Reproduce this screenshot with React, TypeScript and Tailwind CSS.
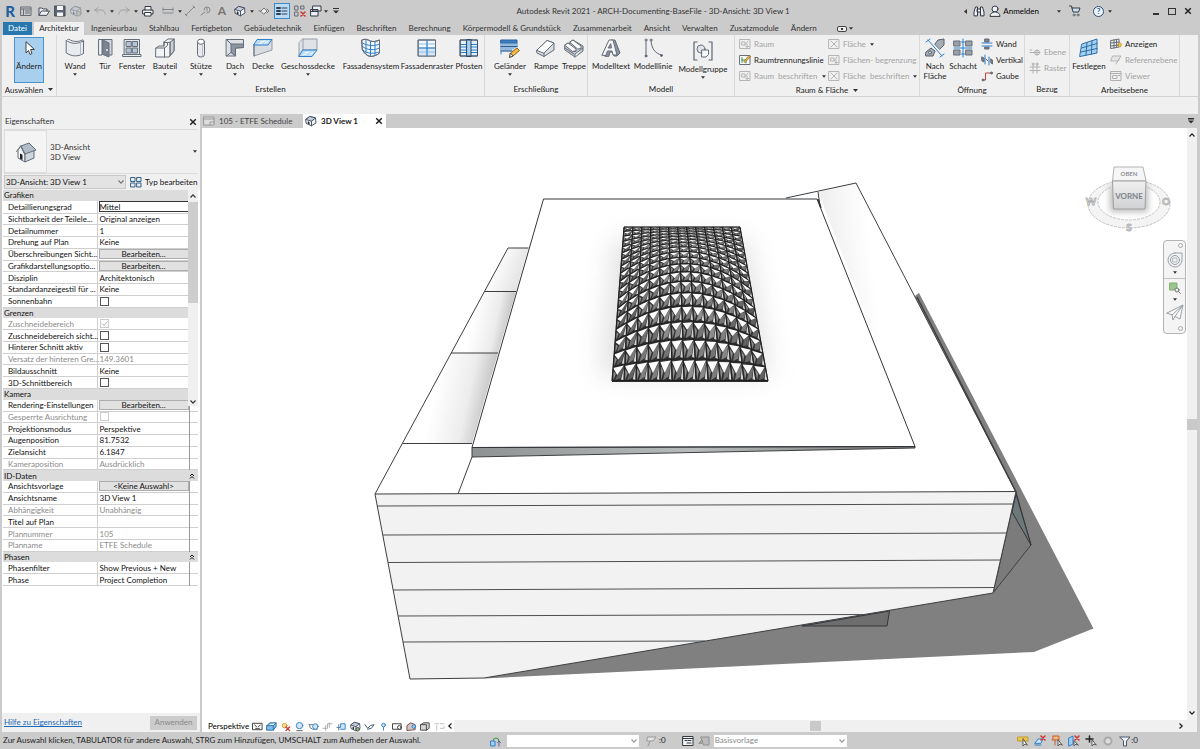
import React from 'react';

type IconProps = { children: React.ReactNode; className?: string; box?: number };

const line = '#656d79';
const blue = '#2f7fc8';
const sky = '#b9dcf5';

const Svg: React.FC<IconProps> = ({ children, className = 'size-5', box = 20 }) => (
  <svg viewBox={`0 0 ${box} ${box}`} className={`${className} shrink-0`} fill="none" stroke={line} strokeWidth="1" strokeLinejoin="round" strokeLinecap="round" aria-hidden="true">
    {children}
  </svg>
);

const Small: React.FC<{ children: React.ReactNode }> = ({ children }) => (
  <Svg className="size-3" box={12}>{children}</Svg>
);

const Caret = ({ className = 'w-[4px]' }: { className?: string }) => (
  <svg viewBox="0 0 5 3" className={`h-[3px] shrink-0 fill-[#333] ${className}`} aria-hidden="true">
    <path d="M0 0h5L2.500 3z" />
  </svg>
);

const Chevron = ({ className = '' }: { className?: string }) => (
  <svg viewBox="0 0 8 8" className={`size-2 shrink-0 ${className}`} fill="none" stroke="currentColor" strokeWidth="1.200" aria-hidden="true">
    <path d="M1.500 2.500 4 5.200 6.500 2.500" />
  </svg>
);

const CloseX = ({ className = '' }: { className?: string }) => (
  <svg viewBox="0 0 8 8" className={`size-2 shrink-0 ${className}`} fill="none" stroke="#222" strokeWidth="1.500" aria-hidden="true">
    <path d="M1.200 1.200l5.600 5.600M6.800 1.200 1.200 6.800" />
  </svg>
);

const house = (
  <>
    <path d="M1 4.500 5 1.500l5.500 1.500 .500 5L6.500 10.800 1.500 8.500z" fill="#f3f5f8" stroke="#4a5568" />
    <path d="M5 1.500 10.500 3l-4 3.200L1 4.500z" fill="#c3ccd8" stroke="#4a5568" />
    <path d="M6.500 6.200v4.600" stroke="#4a5568" />
    <path d="M2.800 6.300l1.700.600v2.600l-1.700-.700z" fill="#222b38" stroke="none" />
  </>
);

/* ---------- ribbon icons ---------- */
const big = {
  wand: (
    <Svg>
      <path d="M1.500 2.500c5 3.500 10 4 17 .500v12.500c-6 3.500-12 3-17-.500z" fill="#e9ebee" />
      <path d="M1.500 2.500c.600-.800 1.500-1.200 2.300-1.200 5 2.800 9.500 2.800 14 .500l.700 1.200" fill="#fff" />
      <path d="M15.500 4.500v12.500" stroke="#b3bac4" />
    </Svg>
  ),
  tuer: (
    <Svg>
      <path d="M4 17V1.500h13V17h-3" fill="#d3d7dd" />
      <path d="M4 1.500h3V17H4z" fill="#f3f4f6" />
      <path d="M8 2l6 3v14l-6-2.500z" fill="#7b8491" />
      <circle cx="12" cy="12" r="1" fill="#eee" stroke="none" />
    </Svg>
  ),
  fenster: (
    <Svg>
      <path d="M2.500 1.500h15v15h-15z" fill="#e3e6ea" />
      <path d="M4.500 3.500h4.800v5H4.500zM10.700 3.500h4.800v5h-4.800zM4.500 10h4.800v5H4.500zM10.700 10h4.800v5h-4.800z" fill="#b4c4d5" />
      <path d="M1 16.500h18v2H1z" fill="#eef0f3" />
    </Svg>
  ),
  bauteil: (
    <Svg>
      <path d="M1 10l3-2h5V4l4-3h6v12l-5 6H1z" fill="#f3f4f6" />
      <path d="M1 10h8.500l3-2.500V4.500L16 4l3-3M9.500 10v9M9 4v4M12.500 4.500H9M15 4.500V18" />
      <path d="M15.500 4l3.500-3v12l-3.500 4z" fill="#cbd0d8" />
    </Svg>
  ),
  stuetze: (
    <Svg>
      <path d="M6.500 4v12.500a3.500 2.500 0 0 0 7 0V4" fill="#e8eaed" />
      <ellipse cx="10" cy="3.700" rx="3.500" ry="2.600" fill="#fff" />
      <path d="M11.500 7v11" stroke="#b6bdc7" />
    </Svg>
  ),
  dach: (
    <Svg>
      <path d="M1.500 1.500h17v8l-8 .500v8H1.500z" fill="#dde1e6" />
      <path d="M1.500 1.500 6 6h12.500v3.500L10.500 10v8L6 14.500V6" fill="#8d96a3" />
      <path d="M1.500 18 6 14.500" />
    </Svg>
  ),
  decke: (
    <Svg>
      <path d="M1 7v11l18-6V2" fill="#d9dce1" stroke="#9299a4" />
      <path d="M1 7v11" />
      <path d="M4.500 1.500H19L15 7H1z" fill={sky} stroke={blue} />
      <path d="M8 4l4-1M6 5.500l3-.500M12 5l3-1.500" stroke="#fff" />
    </Svg>
  ),
  geschoss: (
    <Svg>
      <path d="M5 1h14v11H5L1 18V5z" fill="#dfe2e7" stroke="#979ea9" />
      <path d="M5 1v11" stroke="#979ea9" />
      <path d="M5 12h14l-5 6.500H1z" fill={sky} stroke={blue} />
      <path d="M7 15l4-1M5 17l3-1M12 16.500l3-2" stroke="#fff" />
    </Svg>
  ),
  fsystem: (
    <Svg>
      <path d="M1 2c3-1.500 6-.500 8 1 3 1 6 .500 9.500-1v13c-2 2-6 3.500-9 3.500C6 18 3 15 1.500 12z" fill="#eef5fb" />
      <path d="M1.500 5c5 3 12 3.500 17 1M1.500 8.500c5 4 12 4 17 1.500M2 12c4 4 11 4 16 2M5 2v13M9.500 3.500v15M14 3.500V17" stroke={blue} />
      <path d="M1 2c3-1.500 6-.500 8 1 3 1 6 .500 9.500-1v13c-2 2-6 3.500-9 3.500C6 18 3 15 1.500 12z" />
    </Svg>
  ),
  fraster: (
    <Svg>
      <path d="M1.500 2h17v16h-17z" fill="#f3f8fc" />
      <path d="M2 10h16v8H2z" fill="#d5e6f4" stroke="none" />
      <path d="M10 2v16M1.500 6h17M1.500 10h17M1.500 14h17" stroke="#8cbfe6" />
      <path d="M10 2v16M1.500 10h17" stroke={blue} />
      <path d="M1.500 2h17v16h-17z" />
    </Svg>
  ),
  pfosten: (
    <Svg>
      <path d="M1.500 2h17v16h-17z" fill="#e3f0fa" />
      <path d="M1.500 6.500h17M1.500 9h17M1.500 12h17M1.500 14.500h17" stroke={blue} />
      <path d="M8 1.500h4v17H8z" fill="#a9d1f0" stroke="#27405c" />
      <path d="M1.500 2h17v16h-17z" stroke="#3c5068" />
    </Svg>
  ),
  gelaender: (
    <Svg>
      <path d="M1 2h16v3H1z" fill="#3d82c4" stroke="#2a5f95" />
      <path d="M1 5v11M3 5v8M5 5v8M7 5v8M9 5v8M11 5v8M13 5v6M15 5v5M17 5v4" stroke="#3d82c4" />
      <path d="M1 8.500h16M1 13h11" stroke="#2a5f95" />
      <path d="M9.500 19l1-4 6.500-5 2.500 2.500L13 18z" fill="#f4b942" stroke="#8d6420" />
      <path d="M9.500 19l1-4 2.300 2.800z" fill="#fff" stroke="#555" />
    </Svg>
  ),
  rampe: (
    <Svg>
      <path d="M1 12 11 2.500 18 5v7L8 18.500 1 15z" fill="#d9dde2" />
      <path d="M1 12 11 2.500 18 5 8 15z" fill="#fff" />
      <path d="M8 15v3.500" />
    </Svg>
  ),
  treppe: (
    <Svg>
      <path d="M1 7l3-2 2 1V4l3-2 10 6v5l-8 6L1 12z" fill="#c5ccd5" />
      <path d="M1 7l3-2 8 6v2l-3 .500zM6 4l3-2 8 6v2.500l-3 .500zM9 13.500l3-.500M1 10l9 6M11 19v-3l8-6" fill="#fafafa" />
    </Svg>
  ),
  mtext: (
    <Svg>
      <path d="M4 18 10 2h4l5 13-3 3h-3l-2-4H9l-1 4z" fill="#8b93a0" />
      <path d="M1 17 8 2h4l4 15h-4l-1-4H6.500L5 17zM7.500 10h3L9.800 6z" fill="#f4f5f7" fillRule="evenodd" />
    </Svg>
  ),
  mlinie: (
    <Svg>
      <path d="M3 2.500v15.500M8 2.500c.500 8 4 13 10.500 14.500" stroke="#5c6573" />
      <circle cx="3" cy="2" r="1" fill="#eee" />
      <circle cx="3" cy="18" r="1" fill="#555" />
      <circle cx="8" cy="2" r="1" fill="#eee" />
      <circle cx="18.500" cy="17.500" r="1" fill="#555" />
    </Svg>
  ),
  mgruppe: (
    <Svg>
      <path d="M4 1H1v18h3M16 1h3v18h-3" stroke="#5c6573" strokeWidth="1.200" />
      <circle cx="8" cy="8" r="4" fill="#dfe3e8" />
      <path d="M9 9h6.500v4.500L13 16H9z" fill="#f6f7f8" />
    </Svg>
  ),
  nach: (
    <Svg>
      <path d="M3 2l14 16M1 4l4-3M15 19l4-3" stroke={blue} />
      <path d="M10 6l3-4 6-1v6l-4 4z" fill="#a7adb5" stroke="#555d69" />
      <path d="M1 14l5-4 4 3-2 5H1z" fill="#a7adb5" stroke="#555d69" />
      <circle cx="5" cy="14.500" r="1.500" fill="#eee" stroke="#555d69" />
    </Svg>
  ),
  schacht: (
    <Svg>
      <path d="M1 3h6v5H1zM13 3h6v5h-6zM1 12h6v5H1zM13 12h6v5h-6z" fill="#9aa1ac" stroke="#656d79" />
      <path d="M10 1v18M1 10h18M8.500 4h3M8.500 16h3" stroke={blue} />
    </Svg>
  ),
  festlegen: (
    <Svg>
      <path d="M3 6 18 1v14L1 18.500z" fill="#a5d0ef" stroke="#2c6ea8" />
      <path d="M2.500 10 18 5.500M1.800 14 18 10.500M8 4.500 7 17M13 2.800 12.500 16" stroke="#2c6ea8" />
    </Svg>
  ),
};

const grid = (
  <Small>
    <path d="M1 1.500h10v9H1z" stroke="#b5b5b5" fill="#f0f0f0" />
    <path d="M3 4h3v3H3zM6 7l3-4M7 8.500h3M8 6v4" stroke="#b5b5b5" />
  </Small>
);
const crossBox = (
  <Small>
    <path d="M1 1.500h10v9H1z" stroke="#b5b5b5" fill="#f0f0f0" />
    <path d="M3 3l6 6M9 3 3 9" stroke="#b5b5b5" />
  </Small>
);
const raumtrenn = (
  <Small>
    <path d="M1 1.500h10v9H1z" stroke={line} fill="#fff" />
    <path d="M3 3.500v5M3 6h4v3" stroke="#3a8a4c" />
    <path d="M5 7.500 10 1.500l1.500 1L6.500 8z" fill="#f4b942" stroke="#8d6420" strokeWidth=".700" />
  </Small>
);
const wandIcon = (
  <Small>
    <path d="M4 1h4v3H4zM4 9h4v2H4z" fill="#777f8b" />
    <path d="M1 5h10M1 8h10" stroke={blue} />
  </Small>
);
const vertikalIcon = (
  <Small>
    <path d="M4 1v9M8 3v8" stroke={blue} />
    <path d="M1 3l2 1v4L1 7zM10 5l1.500 1v4L10 9z" fill="#777f8b" />
    <path d="M5 5l2 2" />
  </Small>
);
const gaubeIcon = (
  <Small>
    <path d="M2 10h2.500V3H11" stroke="#b8473c" />
    <circle cx="2" cy="10" r="1" fill="#777" />
    <circle cx="10.500" cy="3" r="1" fill="#777" />
  </Small>
);
const ebeneIcon = (
  <Small>
    <path d="M1 4h2M1 6.500h4" stroke="#b0b0b0" />
    <circle cx="8" cy="6.500" r="2.500" stroke="#b0b0b0" />
    <path d="M5 6.500h6M8 4v5" stroke="#b0b0b0" />
  </Small>
);
const rasterIcon = (
  <Small>
    <path d="M4 3v8M8 3v8M1 5h10M1 8.500h10" stroke="#b0b0b0" />
    <circle cx="4" cy="2" r="1" stroke="#b0b0b0" />
    <circle cx="8" cy="2" r="1" stroke="#b0b0b0" />
  </Small>
);
const anzeigenIcon = (
  <Small>
    <path d="M1 2.500 9 1v8L1 10.500zM1 5l8-1M1 8l8-1M4 2v8M6.500 1.500v8" stroke={line} />
    <path d="M8 6.500c0-2 3.500-2 3.500 0 0 1-1 1.500-1 2.500H9c0-1-1-1.500-1-2.500z" fill="#f6c445" stroke="#b98515" strokeWidth=".600" />
  </Small>
);
const refIcon = (
  <Small>
    <path d="M3 2h8L8 7H1z" fill="#e6e6e6" stroke="#b5b5b5" />
    <path d="M6 10l3-5" stroke="#b5b5b5" />
  </Small>
);
const viewerIcon = (
  <Small>
    <path d="M1 1.500h10v9H1zM1 3.500h10M3 5.500h4v3H3zM8 5.500h2" stroke="#b0b0b0" />
  </Small>
);

interface BigButtonProps {
  icon: React.ReactNode;
  label: string;
  width: string;
  caret?: boolean;
  low?: boolean;
}

const BigButton: React.FC<BigButtonProps> = ({ icon, label, width, caret, low }) => (
  <button className={`${width} flex flex-col items-center shrink-0 whitespace-nowrap ${low ? 'pt-[6px]' : 'pt-[3px]'}`}>
    {icon}
    <span className="mt-[3px] leading-[10px] whitespace-pre text-center">{label}</span>
    {caret && <Caret className="w-[4px] mt-[2px]" />}
  </button>
);

interface SmallButtonProps {
  icon: React.ReactNode;
  label: string;
  off?: boolean;
  caret?: boolean;
}

const SmallButton: React.FC<SmallButtonProps> = ({ icon, label, off, caret }) => (
  <button disabled={off} className={`h-4 flex items-center gap-[3px] whitespace-nowrap ${off ? 'text-[#a3a3a3]' : 'text-[#222]'}`}>
    {icon}
    <span className="whitespace-pre">{label}</span>
    {caret && <Caret className="w-[4px] ml-[1px]" />}
  </button>
);

interface PanelProps {
  title: string;
  width: string;
  caret?: boolean;
  children: React.ReactNode;
}

const Panel: React.FC<PanelProps> = ({ title, width, caret, children }) => (
  <section className={`${width} flex flex-col border-r border-[#d9d9d9]`}>
    <div className="flex-1 flex">{children}</div>
    <h2 className="h-[14px] flex items-center justify-center gap-[5px] leading-none">
      {title}
      {caret && <Caret className="w-[5px]" />}
    </h2>
  </section>
);

/* ---------- title bar ---------- */
const quickItems: { name: string; width: string; icon: React.ReactNode; active?: boolean }[] = [
  { name: 'Startseite', width: 'w-4', icon: <Small><path d="M1 2h10v8.500H1zM1 4h10M3.500 4v6M5.500 6h4M5.500 8h4" /></Small> },
  { name: 'Öffnen', width: 'w-5', icon: <Small><path d="M1 10V3h3l1 1h4v2M1 10l2.500-4H11.500L9 10z" fill="#eef1f5" stroke="#444c58" /></Small> },
  { name: 'Speichern', width: 'w-3', icon: <Small><path d="M1 1h10v10H1z" fill="#5c6675" stroke="#3f4855" /><path d="M3 1h6v4H3zM3 7.500h6V11H3z" fill="#f4f4f4" stroke="none" /></Small> },
  { name: 'Synchronisieren', width: 'w-5', icon: <Small><g opacity=".450">{house}<circle cx="8.500" cy="8.500" r="2.500" fill="#aaa" /></g></Small> },
  { name: 'c1', width: 'w-1', icon: <Caret /> },
  { name: 'Rückgängig', width: 'w-5', icon: <Small><path d="M1 5h6c3 0 4 2 4 4M1 5l3-2.500M1 5l3 2.500" stroke="#a0a0a0" /></Small> },
  { name: 'c2', width: 'w-1', icon: <Caret /> },
  { name: 'Wiederholen', width: 'w-5', icon: <Small><path d="M11 5H5C2 5 1 7 1 9M11 5 8 2.500M11 5 8 7.500" stroke="#a0a0a0" /></Small> },
  { name: 'c3', width: 'w-1', icon: <Caret /> },
  { name: 'Drucken', width: 'w-5', icon: <Small><path d="M3 5V1.500h6V5M1 5h10v4H1z" fill="#f2f2f2" stroke="#333a45" /><path d="M3 7.500h6V11H3z" fill="#fff" stroke="#333a45" /></Small> },
  { name: 'Messen', width: 'w-5', icon: <Small><path d="M1 8h10M1 3v3M11 3v3M1 4.500h10" stroke="#85888d" /></Small> },
  { name: 'c4', width: 'w-1', icon: <Caret /> },
  { name: 'Bemaßung', width: 'w-4', icon: <Small><path d="M2 10 10 2M1 9l2 2M9 1l2 2" stroke="#85888d" /></Small> },
  { name: 'Kennzeichen', width: 'w-4', icon: <Small><path d="M1 10 5 7M4 5a3 3 0 1 1 6 0 3 3 0 0 1-3 3M7 3v3" stroke="#85888d" /></Small> },
  { name: 'Text', width: 'w-4', icon: <span className="text-xs leading-none font-bold text-[#777]">A</span> },
  { name: '3D-Ansicht', width: 'w-5', icon: <Small>{house}</Small> },
  { name: 'c5', width: 'w-1', icon: <Caret /> },
  { name: 'Schnitt', width: 'w-5', icon: <Small><path d="M3 6 6 3l3 3-3 3z" fill="#eee" stroke="#777" /><path d="M1 6h2M9 4l2 2-2 2" stroke="#777" /></Small> },
  { name: 'Dünne Linien', width: 'w-4', active: true, icon: <Small><path d="M1 3h3M1 6h3M1 9h3" strokeWidth="2" stroke="#2c3f57" /><path d="M6 3h5M6 6h5M6 9h5" stroke="#2c3f57" /></Small> },
  { name: 'Verdeckte schließen', width: 'w-5', icon: <Small><path d="M1 1h3v4H1zM7 1h3v3H7zM1 7h3v4H1z" /><path d="M7 7l4 4M11 7l-4 4" stroke="#d0342c" strokeWidth="1.500" /></Small> },
  { name: 'Fenster wechseln', width: 'w-3', icon: <Small><path d="M3 1h8v5H3zM1 4.500h7V11H1zM1 6.500h7" fill="#eef1f5" stroke="#333a45" /></Small> },
  { name: 'c6', width: 'w-2', icon: <Caret /> },
  { name: 'Anpassen', width: 'w-3', icon: <svg viewBox="0 0 6 6" className="size-[6px] fill-[#333]"><path d="M0 0h6v1H0zM0 2.500h6L3 5.500z" /></svg> },
];

const TitleBar = () => (
  <header className="h-[22px] flex items-center shrink-0 pr-1">
    <div className="flex items-center pl-[2px]">
      <span className="w-4 flex justify-center text-[15px] leading-none font-black text-[#1f5f9e]">R</span>
      {quickItems.map((item) => (
        <button
          key={item.name}
          aria-label={item.name}
          className={`${item.width} h-4 flex items-center justify-center shrink-0 ${item.active ? 'bg-[#bcdcf4] border border-[#3c8acb]' : ''}`}
        >
          {item.icon}
        </button>
      ))}
    </div>
    <h1 className="flex-1 text-center text-[#333]">Autodesk Revit 2021 - ARCH-Documenting-BaseFile - 3D-Ansicht: 3D View 1</h1>
    <div className="flex items-center">
      <svg viewBox="0 0 3 5" className="w-[3px] h-[5px] fill-[#333] mr-[6px]" aria-hidden="true"><path d="M3 0v5L0 2.500z" /></svg>
      <button aria-label="Suchen" className="mr-1"><Small><path d="M1 10.500V7l1.500-5h2v8.500zM7.500 10.500V2h2L11 7v3.500zM4.500 4h3v3h-3z" fill="#eef1f5" stroke="#333a45" /></Small></button>
      <button className="flex items-center gap-[2px]">
        <Small><circle cx="6" cy="4" r="3" fill="#eef1f5" stroke="#333a45" /><path d="M1 11c0-3 3-3.500 4-4h2c1 .500 4 1 4 4z" fill="#eef1f5" stroke="#333a45" /></Small>
        Anmelden
      </button>
      <Caret className="w-[4px] ml-[18px] mr-2" />
      <button aria-label="App Store" className="mr-3"><Small><path d="M.500 1h2l1.500 6h5.500l1.500-4H3" fill="#cfe0f2" stroke="#333a45" /><circle cx="5" cy="10" r="1" /><circle cx="9" cy="10" r="1" /></Small></button>
      <button aria-label="Hilfe" className="size-[11px] rounded-full border border-[#2d4a6d] bg-[#eef5fb] flex items-center justify-center font-bold text-[#1f5f9e] leading-none">?</button>
      <Caret className="w-[4px] ml-1 mr-9" />
      <button aria-label="Minimieren" className="w-4 h-2 flex items-end justify-center"><span className="w-[6px] h-[2px] bg-[#333]" /></button>
      <button aria-label="Maximieren" className="w-4 flex justify-center"><span className="w-2 h-[7px] border border-[#333]" /></button>
      <button aria-label="Schließen" className="w-4 flex justify-center"><CloseX /></button>
    </div>
  </header>
);

const ribbonTabs = [
  'Ingenieurbau', 'Stahlbau', 'Fertigbeton', 'Gebäudetechnik', 'Einfügen', 'Beschriften', 'Berechnung',
  'Körpermodell & Grundstück', 'Zusammenarbeit', 'Ansicht', 'Verwalten', 'Zusatzmodule', 'Ändern',
];

const RibbonTabs = () => (
  <nav className="h-[13px] flex items-stretch shrink-0 pl-[3px] whitespace-nowrap text-[#333]">
    <button className="w-[29px] bg-[#2678ae] text-white">Datei</button>
    <button className="w-[50px] ml-[2px] mr-[1px] bg-[#f0f0f0] text-[#222]">Architektur</button>
    {ribbonTabs.map((tab) => (
      <button key={tab} className="px-[6px]">{tab}</button>
    ))}
    <button aria-label="Multifunktionsleiste minimieren" className="ml-[14px] flex items-center gap-[2px]">
      <span className="w-[10px] h-[6px] rounded-[2px] border border-[#444] bg-[#eee] flex items-center justify-center"><span className="size-[2px] bg-[#333]" /></span>
      <Caret />
    </button>
  </nav>
);

const Ribbon = () => (
  <div className="h-[62px] mx-[2px] flex shrink-0 bg-[#f0f0f0] border-b border-[#d2d2d2] text-[#222]">
    <Panel title="Auswählen" width="w-[55px]" caret>
      <button className="ml-3 mt-[2px] w-[30px] h-[46px] flex flex-col items-center bg-[#a9cfef] border border-[#4b91cc]">
        <Svg className="size-5">
          <path d="M7 4v11l2.500-2.500 1.500 4 2-1-1.500-4H15z" fill="#fff" stroke="#444" />
        </Svg>
        <span className="mt-[3px] leading-[10px]">Ändern</span>
      </button>
    </Panel>
    <Panel title="Erstellen" width="w-[428px]">
      <div className="flex pl-[2px]">
        <BigButton icon={big.wand} label="Wand" width="w-8" caret />
        <BigButton icon={big.tuer} label="Tür" width="w-7" />
        <BigButton icon={big.fenster} label="Fenster" width="w-[26px]" />
        <BigButton icon={big.bauteil} label="Bauteil" width="w-10" caret />
        <BigButton icon={big.stuetze} label="Stütze" width="w-8" caret />
        <BigButton icon={big.dach} label="Dach" width="w-9" caret />
        <BigButton icon={big.decke} label="Decke" width="w-5" />
        <BigButton icon={big.geschoss} label="Geschossdecke" width="w-[70px]" caret />
        <BigButton icon={big.fsystem} label="Fassadensystem" width="w-14" />
        <BigButton icon={big.fraster} label="Fassadenraster" width="w-14" />
        <BigButton icon={big.pfosten} label="Pfosten" width="w-7" />
      </div>
    </Panel>
    <Panel title="Erschließung" width="w-[103px]">
      <div className="flex pl-[6px]">
        <BigButton icon={big.gelaender} label="Geländer" width="w-[38px]" caret />
        <BigButton icon={big.rampe} label="Rampe" width="w-[34px]" />
        <BigButton icon={big.treppe} label="Treppe" width="w-[22px]" />
      </div>
    </Panel>
    <Panel title="Modell" width="w-[147px]">
      <div className="flex pl-[1px]">
        <BigButton icon={big.mtext} label="Modelltext" width="w-11" />
        <BigButton icon={big.mlinie} label="Modelllinie" width="w-10" />
        <BigButton icon={big.mgruppe} label="Modellgruppe" width="w-[60px]" caret low />
      </div>
    </Panel>
    <Panel title="Raum & Fläche" width="w-[185px]" caret>
      <div className="flex flex-col w-[90px] pl-1 pt-[1px]">
        <SmallButton icon={grid} label="Raum" off />
        <SmallButton icon={raumtrenn} label="Raumtrennungslinie" />
        <SmallButton icon={grid} label="Raum  beschriften" off caret />
      </div>
      <div className="flex flex-col pl-[3px] pt-[1px]">
        <SmallButton icon={crossBox} label="Fläche" off caret />
        <SmallButton icon={grid} label="Flächen- begrenzung" off />
        <SmallButton icon={crossBox} label="Fläche  beschriften" off caret />
      </div>
    </Panel>
    <Panel title="Öffnung" width="w-[105px]">
      <div className="flex pl-[1px]">
        <BigButton icon={big.nach} label={'Nach\nFläche'} width="w-7" />
        <BigButton icon={big.schacht} label="Schacht" width="w-7" />
      </div>
      <div className="flex flex-col pl-1 pt-[1px]">
        <SmallButton icon={wandIcon} label="Wand" />
        <SmallButton icon={vertikalIcon} label="Vertikal" />
        <SmallButton icon={gaubeIcon} label="Gaube" />
      </div>
    </Panel>
    <Panel title="Bezug" width="w-[45px]">
      <div className="flex flex-col pl-1 pt-[9px]">
        <SmallButton icon={ebeneIcon} label="Ebene" off />
        <SmallButton icon={rasterIcon} label="Raster" off />
      </div>
    </Panel>
    <Panel title="Arbeitsebene" width="w-[110px]">
      <BigButton icon={big.festlegen} label="Festlegen" width="w-[38px]" />
      <div className="flex flex-col pl-[2px] pt-[1px]">
        <SmallButton icon={anzeigenIcon} label="Anzeigen" />
        <SmallButton icon={refIcon} label="Referenzebene" off />
        <SmallButton icon={viewerIcon} label="Viewer" off />
      </div>
    </Panel>
  </div>
);

/* ---------- properties ---------- */
type Kind = 'text' | 'button' | 'check' | 'checked' | 'input';
interface Row { name: string; value?: string; kind?: Kind; off?: boolean }

const groups: { title: string; folded?: boolean; rows: Row[] }[] = [
  {
    title: 'Grafiken',
    rows: [
      { name: 'Detaillierungsgrad', value: 'Mittel', kind: 'input' },
      { name: 'Sichtbarkeit der Teilele...', value: 'Original anzeigen' },
      { name: 'Detailnummer', value: '1' },
      { name: 'Drehung auf Plan', value: 'Keine' },
      { name: 'Überschreibungen Sicht...', value: 'Bearbeiten...', kind: 'button' },
      { name: 'Grafikdarstellungsoptio...', value: 'Bearbeiten...', kind: 'button' },
      { name: 'Disziplin', value: 'Architektonisch' },
      { name: 'Standardanzeigestil für ...', value: 'Keine' },
      { name: 'Sonnenbahn', kind: 'check' },
    ],
  },
  {
    title: 'Grenzen',
    rows: [
      { name: 'Zuschneidebereich', kind: 'checked', off: true },
      { name: 'Zuschneidebereich sicht...', kind: 'check' },
      { name: 'Hinterer Schnitt aktiv', kind: 'check' },
      { name: 'Versatz der hinteren Gre...', value: '149.3601', off: true },
      { name: 'Bildausschnitt', value: 'Keine' },
      { name: '3D-Schnittbereich', kind: 'check' },
    ],
  },
  {
    title: 'Kamera',
    rows: [
      { name: 'Rendering-Einstellungen', value: 'Bearbeiten...', kind: 'button' },
      { name: 'Gesperrte Ausrichtung', kind: 'check', off: true },
      { name: 'Projektionsmodus', value: 'Perspektive' },
      { name: 'Augenposition', value: '81.7532' },
      { name: 'Zielansicht', value: '6.1847' },
      { name: 'Kameraposition', value: 'Ausdrücklich', off: true },
    ],
  },
  {
    title: 'ID-Daten',
    folded: true,
    rows: [
      { name: 'Ansichtsvorlage', value: '<Keine Auswahl>', kind: 'button' },
      { name: 'Ansichtsname', value: '3D View 1' },
      { name: 'Abhängigkeit', value: 'Unabhängig', off: true },
      { name: 'Titel auf Plan', value: '' },
      { name: 'Plannummer', value: '105', off: true },
      { name: 'Planname', value: 'ETFE Schedule', off: true },
    ],
  },
  {
    title: 'Phasen',
    folded: true,
    rows: [
      { name: 'Phasenfilter', value: 'Show Previous + New' },
      { name: 'Phase', value: 'Project Completion' },
    ],
  },
];

const Cell: React.FC<{ row: Row }> = ({ row }) => {
  if (row.kind === 'button') {
    return <button className="block w-full h-[10px] leading-[8px] text-center bg-[#e1e1e1] border border-[#adadad]">{row.value}</button>;
  }
  if (row.kind === 'input') {
    return <input aria-label={row.name} defaultValue={row.value} className="block w-full h-[11px] border border-[#333] bg-white outline-none" />;
  }
  if (row.kind === 'check' || row.kind === 'checked') {
    return (
      <span className="relative block size-[9px] ml-[1px]">
        <input
          type="checkbox"
          aria-label={row.name}
          defaultChecked={row.kind === 'checked'}
          disabled={row.off}
          className={`block appearance-none size-[9px] border bg-white ${row.off ? 'border-[#ccc]' : 'border-[#555]'}`}
        />
        {row.kind === 'checked' && (
          <svg viewBox="0 0 9 9" className="absolute inset-0 size-[9px]" fill="none" stroke="#aaa" aria-hidden="true"><path d="M2 4.500 4 6.500 7.500 2.500" /></svg>
        )}
      </span>
    );
  }
  return <span className="pl-[1px]">{row.value}</span>;
};

const Properties = () => (
  <aside className="w-[198px] flex flex-col shrink-0 bg-[#f0f0f0] text-[#111]">
    <div className="h-[15px] flex items-center justify-between px-[3px] text-[#333]">
      <h2>Eigenschaften</h2>
      <button aria-label="Eigenschaften schließen"><CloseX /></button>
    </div>
    <div className="h-[45px] flex items-center mx-[2px] border-y border-[#dcdcdc] pr-[1px] text-[#333]">
      <div className="size-[43px] border border-[#dcdcdc] bg-[#f4f4f4] flex items-center justify-center">
        <Svg className="size-6" box={24}>
          <path d="M4 10v8l7 4V14L7 6z" fill="#f4f5f7" />
          <path d="M11 14v8l9-4v-8" fill="#d0d6de" />
          <path d="M7 6l8-3 7 7-11 4z" fill="#b2bcc9" />
          <path d="M2.500 11.500 7 6l4 8" />
          <path d="M6 13.500l2.500 1.300V20L6 18.700z" fill="#222" stroke="none" />
        </Svg>
      </div>
      <div className="flex-1 pl-[3px] leading-[10px]">
        <div>3D-Ansicht</div>
        <div>3D View</div>
      </div>
      <Caret />
    </div>
    <div className="h-4 flex items-center pl-[2px] gap-1">
      <div className="relative">
        <select aria-label="Typ" className="block w-[122px] h-[14px] pl-[1px] appearance-none bg-[#e3e3e3] border border-[#c8c8c8]">
          <option>3D-Ansicht: 3D View 1</option>
        </select>
        <Chevron className="absolute right-[1px] top-[3px] text-[#777]" />
      </div>
      <button className="flex items-center gap-[3px] whitespace-nowrap">
        <Small>
          <path d="M1 1.500h4v4H1zM1 7h4v4H1zM7 1.500h4v4H7zM7 7h4v4H7z" fill="#e3edf6" stroke="#3a5f85" />
        </Small>
        Typ bearbeiten
      </button>
    </div>
    <div className="relative flex-1 bg-white pl-[1px] pr-[2px]">
      <table className="w-full h-[396px] table-fixed border-collapse leading-[10px] whitespace-nowrap">
        <colgroup>
          <col />
          <col className="w-[92px]" />
          <col className="w-[9px]" />
        </colgroup>
        {groups.map((group) => (
          <tbody key={group.title}>
            <tr className="bg-[#dcdcdc]">
              <th colSpan={2} className="p-0 pl-[1px] text-left font-normal">{group.title}</th>
              <td className="p-0">
                {group.folded && (
                  <svg viewBox="0 0 6 6" className="size-[6px]" fill="none" stroke="#111" aria-hidden="true"><path d="M1 3l2-2 2 2M1 5.500l2-2 2 2" /></svg>
                )}
              </td>
            </tr>
            {group.rows.map((row) => (
              <tr key={row.name} className={`border-b border-[#cfcfcf] ${row.off ? 'text-[#8a8a8a]' : ''}`}>
                <th className="p-0 pl-[5px] text-left font-normal border-r border-[#cfcfcf]">{row.name}</th>
                <td className="p-0 pl-[1px] border-r border-[#9a9a9a]"><Cell row={row} /></td>
                <td className="p-0" />
              </tr>
            ))}
          </tbody>
        ))}
      </table>
      <div className="absolute right-[2px] top-0 h-[216px] w-[10px] bg-[#f0f0f0] flex flex-col items-center">
        <Chevron className="rotate-180 my-[2px] text-[#333]" />
        <div className="w-full h-[101px] bg-[#cdcdcd]" />
        <Chevron className="mt-auto text-[#333]" />
      </div>
    </div>
    <div className="h-[19px] flex items-center justify-between pl-[2px] pr-[3px]">
      <a href="#hilfe" className="text-[#1668b8] underline">Hilfe zu Eigenschaften</a>
      <button disabled className="w-[47px] h-[14px] bg-[#cccccc] text-[#8a8a8a]">Anwenden</button>
    </div>
  </aside>
);

/* ---------- 3D scene ---------- */
const COLS = 13;
const ROWS = 18;

const meshPoint = (u: number, v: number): [number, number] => {
  const q = 1.07;
  const t = (Math.pow(q, v * ROWS) - 1) / (Math.pow(q, ROWS) - 1);
  const left = 624 - 12 * t;
  const right = 740 + 28 * t;
  const y = 227 + 154 * t - 27 * 4 * u * (1 - u) * Math.sin(Math.PI * t);
  return [left + (right - left) * u, y];
};

const cellPoly = (c: number, r: number, pts: [number, number][]) =>
  pts
    .map(([du, dv]) => meshPoint((c + du) / COLS, (r + dv) / ROWS).map((n) => n.toFixed(1)).join(','))
    .join(' ');

const cells = Array.from({ length: COLS * ROWS }, (_, i) => ({ c: i % COLS, r: Math.floor(i / COLS) }));
const rim = Array.from({ length: COLS + 1 }, (_, i) => i);

const Canopy = () => (
  <g>
    <path d="M624 227H740L768 381H612z" fill="#2a2a2a" />
    {cells.map(({ c, r }) => {
      const side = (c + 0.5) / COLS;
      const shade = 84 + Math.round(36 * Math.sin(Math.PI * side)) + ((c * 7 + r * 5) % 4) * 8;
      const drop = 0.42 + ((c * 3 + r) % 3) * 0.06;
      return (
        <g key={`${c}-${r}`}>
          <polygon points={cellPoly(c, r, [[0, 0], [1, 0], [1, 1], [0, 1]])} fill="#333" />
          <polygon points={cellPoly(c, r, [[0.45, drop], [0.95, 0.12], [0.72, 0.8], [0.25, 0.97]])} fill={`rgb(${shade},${shade},${shade})`} />
          <polygon points={cellPoly(c, r, [[0.02, 0.1], [0.92, 0.06], [0.4, drop + 0.08]])} fill="#fcfcfc" />
          <polygon points={cellPoly(c, r, [[0.93, 0.28], [0.96, 0.95], [0.74, 0.9]])} fill="#d6d6d6" />
          <polygon points={cellPoly(c, r, [[0.06, 0.3], [0.28, 0.55], [0.1, 0.95]])} fill="#8c8c8c" />
          <polygon points={cellPoly(c, r, [[0, 0], [1, 0], [1, 1], [0, 1]])} fill="none" stroke="#1a1a1a" strokeWidth=".5" />
        </g>
      );
    })}
    <polyline points={rim.map((c) => meshPoint(c / COLS, 1).join(',')).join(' ')} fill="none" stroke="#111" strokeWidth="1.5" />
    <path d="M624 227H740L768 381H612z" fill="none" stroke="#222" />
  </g>
);

const Scene = () => (
  <svg viewBox="202 128 985 592" className="absolute inset-0 size-full" role="img" aria-label="3D View 1">
    <defs>
      <linearGradient id="strip" x1="0" y1="0.3" x2="1" y2="0.5">
        <stop offset="0.35" stopColor="#fff" />
        <stop offset="0.7" stopColor="#ececec" />
        <stop offset="1" stopColor="#b4b4b4" />
      </linearGradient>
      <linearGradient id="stripTop" x1="0" y1="0" x2="1" y2="0.4">
        <stop offset="0.3" stopColor="#fff" />
        <stop offset="1" stopColor="#e2e2e2" />
      </linearGradient>
      <linearGradient id="edge" x1="0" y1="0" x2="1" y2="0">
        <stop offset="0" stopColor="#8e9292" />
        <stop offset="0.5" stopColor="#b9bcbc" />
        <stop offset="1" stopColor="#777" />
      </linearGradient>
      <linearGradient id="back" x1="0" y1="0.2" x2="1" y2="0">
        <stop offset="0" stopColor="#ececec" />
        <stop offset="0.35" stopColor="#fff" />
      </linearGradient>
      <filter id="soft" x="-40%" y="-40%" width="180%" height="180%"><feGaussianBlur stdDeviation="13" /></filter>
    </defs>

    {/* ground shadow */}
    <path d="M916 295 919 293 1093.500 628.500 1034 652 484 678.500 700 600z" fill="#808080" />
    <path d="M375 494 508 248H528L786 198 856 183 1016 492 993 593z" fill="#fff" />

    {/* lower roof strips */}
    <path d="M508 248h20.500L516 291.500H484z" fill="url(#stripTop)" />
    <path d="M484 291.500h32L498 353H451z" fill="url(#strip)" />
    <path d="M451 353h47l-26 90.500H402.500z" fill="url(#strip)" />
    <path d="M818 192 856 183 960 384 915 440z" fill="url(#back)" />

    <g fill="none" stroke="#3c3f42">
      <path d="M528.500 248H508L375 494M484 291.500h32M451 353h47M402.500 443.500H472M472 457 458 494" />
      <path d="M786 198 856 183 1016 492M818 192l2 14" />
      <path d="M917 297 1016 492" strokeWidth="1.500" />
    </g>

    {/* upper slab */}
    <path d="M543.500 199H817L915 446.500 472 447.500z" fill="#fff" />
    <path d="M472 447.500 915 446.500V448L472 457z" fill="url(#edge)" stroke="#3c3f42" />
    <path d="M614 240H748L770 375H600z" fill="#ababab" opacity=".350" filter="url(#soft)" />
    <path d="M543.500 199H817L915 446.500 472 447.500z" fill="none" stroke="#33363a" />
    <path d="M818 199 821 208" stroke="#33363a" strokeWidth="1.500" />
    <Canopy />

    {/* side wedge */}
    <path d="M1016 492 1031 545 993 593z" fill="#7b7b7b" stroke="#3c3f42" />
    <path d="M1016 494 1031 545 1012 512z" fill="#6d7878" stroke="#33363a" />
    <path d="M802 626H887L889.500 611z" fill="#6e6e6e" stroke="#33363a" />

    {/* facade */}
    <path d="M375 494 1016 491.500 993 593 484 678 410 679z" fill="#f2f2f2" stroke="#3c3f42" />
    <path d="M377 506 1013 504M383 535 1006 533M388 562.500 1000 560M393 590 994 587.500M398 616 864 614.500M403 642 705 641" fill="none" stroke="#4c4f52" />
  </svg>
);

const ViewCube = () => (
  <svg viewBox="0 0 90 72" className="w-[90px] h-[72px]" aria-label="ViewCube">
    <defs>
      <linearGradient id="cube" x1="0" y1="0" x2="0" y2="1">
        <stop offset="0" stopColor="#f1f1f1" />
        <stop offset="1" stopColor="#cfd0d2" />
      </linearGradient>
      <filter id="cubeShadow" x="-30%" y="-30%" width="160%" height="160%"><feGaussianBlur stdDeviation="3" /></filter>
    </defs>
    <ellipse cx="45" cy="41" rx="41" ry="24" fill="#f4f4f4" stroke="#c2c2c2" strokeDasharray="3 1" />
    <ellipse cx="45" cy="39" rx="31" ry="18" fill="#fff" stroke="#c6c6c6" strokeDasharray="3 1" />
    <path d="M26 22H64V49H26z" fill="#bbb" filter="url(#cubeShadow)" />
    <path d="M30 4H59L62 18H28.500z" fill="#f6f6f6" stroke="#b3b3b3" />
    <path d="M28.500 18H62l-1 28H29.500z" fill="url(#cube)" stroke="#a0a0a0" />
    <text x="45" y="13" textAnchor="middle" fontSize="6" fontWeight="700" fill="#8c9096">OBEN</text>
    <text x="45" y="36" textAnchor="middle" fontSize="8" fontWeight="700" fill="#7d828a">VORNE</text>
    <g fontSize="10" fontWeight="700" fill="#f4f4f4" stroke="#a9a9a9" strokeWidth=".800" textAnchor="middle">
      <text x="7" y="42">W</text>
      <text x="82" y="42">O</text>
      <text x="45" y="68">S</text>
    </g>
  </svg>
);

const NavBar = () => (
  <div className="w-[23px] h-[94px] rounded-[4px] border border-[#b4b4b4] bg-[#f4f4f4] flex flex-col items-center justify-between py-[2px]">
    <span className="self-end mr-[2px] size-[5px] rounded-full border border-[#aaa]" />
    <button aria-label="Navigationsrad">
      <Svg className="size-4" box={16}>
        <path d="M8 1h7v7a7 7 0 1 1-7-7z" fill="#f2f2f2" stroke="#9aa0a8" />
        <circle cx="8" cy="8" r="4.500" stroke="#9aa0a8" />
        <path d="M6 6h4v4H6z" stroke="#b5bac1" />
      </Svg>
    </button>
    <Caret />
    <span className="w-full h-px bg-[#c4c4c4]" />
    <button aria-label="Zoom">
      <Small>
        <path d="M1 1h7v7H1z" fill="#9cc48f" stroke="#7fae70" />
        <circle cx="8" cy="8" r="2" fill="#eee" stroke="#777" />
        <path d="M9.500 9.500l2 2" stroke="#777" />
      </Small>
    </button>
    <Caret />
    <button aria-label="Fliegen">
      <Svg className="size-[18px]" box={18}>
        <path d="M1 9 17 1 14 15 9 12.500 7 16 6 11z" fill="#fafafa" stroke="#9aa0a8" />
        <path d="M6 11 17 1 9 12.500" stroke="#9aa0a8" />
      </Svg>
    </button>
    <span className="self-end mr-[2px] size-[5px] rounded-full border border-[#aaa]" />
  </div>
);

const viewIcons: { name: string; icon: React.ReactNode }[] = [
  { name: 'Größe', icon: <path d="M1 2.500h10v7H1zM3 4.500l2 1.500M9 4.500 7 6M4 8h4" stroke="#333" /> },
  { name: 'Grafikstil', icon: <path d="M1 5l3-3h7v4l-3 4H1zM1 5h7l3-3M8 5v5" fill="#7fbdec" stroke="#2b6ca5" /> },
  { name: 'Sonnenbahn', icon: <><circle cx="5" cy="5" r="2.500" fill="#fbe3a6" stroke="#d8931f" /><path d="M6.500 6.500l4 4M10.500 6.500l-4 4" stroke="#d0342c" strokeWidth="1.500" /></> },
  { name: 'Schatten', icon: <><circle cx="6" cy="5" r="3.500" fill="#cfe7fa" stroke={blue} /><path d="M3 10.500h6" stroke="#555" /></> },
  { name: 'Rendern', icon: <><path d="M1 4h4M2 4v3l3 2h5" /><circle cx="8" cy="6" r="3" fill="#cfe7fa" stroke={blue} /></> },
  { name: 'Zuschneiden', icon: <path d="M1 8h5V3h5M4 5v5M8 2v5" stroke="#aaa" /> },
  { name: 'Zuschnitt zeigen', icon: <><path d="M1 7h4V3h5v6H5" stroke={blue} fill="#cfe7fa" /><path d="M3 4v6" /></> },
  { name: 'Sperren', icon: <>{house}<circle cx="8.500" cy="9" r="2" fill="#7bb36b" stroke="#555" /></> },
  { name: 'Ausblenden', icon: <path d="M1 4l3 4 3-3 4-1-3 4-4 1" stroke="#39506b" /> },
  { name: 'Verdeckte Elemente', icon: <><circle cx="6" cy="4.500" r="2" fill="#cfe7fa" stroke={blue} /><path d="M6 7v3" stroke={blue} /></> },
  { name: 'Temporäre Ansicht', icon: <><path d="M1 3h9v6H1z" stroke="#333" /><circle cx="8" cy="7" r="2" fill="#fff" stroke="#333" /></> },
  { name: 'Analyse', icon: <><path d="M1 10V5l4-3 5 2v5z" fill="#d8c3c3" stroke="#74423d" /><circle cx="8.500" cy="6" r="2" fill="#9ccbf1" stroke={blue} /></> },
  { name: 'Verschiebung', icon: <><path d="M1 4h6v6H1zM1 4l3-2h6v6l-3 2" fill="#d5d5d5" stroke="#444" /></> },
  { name: 'Abhängigkeiten', icon: <path d="M1 3h4M7 3h4M3 5v5M7 8h4V6" stroke="#bbb" /> },
];

const Viewport = () => (
  <main className="flex-1 min-w-0 flex flex-col ml-[2px] mr-[3px] bg-white">
    <div className="h-[14px] flex items-stretch bg-[#cbcbcb] shrink-0 text-[#444]">
      <button className="w-[101px] flex items-center gap-[4px] pl-[1px]">
        <Small><path d="M1 2h10v8H1zM1 4h10M7 10V7h4" fill="#ddd" stroke="#999" /></Small>
        105 - ETFE Schedule
      </button>
      <div className="w-[83px] flex items-center gap-[3px] pl-[2px] pr-[3px] bg-white font-bold text-[#222]">
        <Small>{house}</Small>
        <span className="flex-1 pl-[1px]">3D View 1</span>
        <button aria-label="Ansicht schließen"><CloseX /></button>
      </div>
      <button aria-label="Fensterliste" className="ml-auto mr-[3px]">
        <svg viewBox="0 0 6 6" className="size-[6px] fill-[#333]"><path d="M0 0h6v1.500H0zM0 2.500h6L3 5.500z" /></svg>
      </button>
    </div>
    <div className="flex-1 flex min-h-0">
      <div className="relative flex-1 overflow-hidden">
        <Scene />
        <div className="absolute right-[13px] top-[35px]"><ViewCube /></div>
        <div className="absolute right-[1px] top-[112px]"><NavBar /></div>
      </div>
      <div className="w-[10px] flex flex-col items-center justify-between bg-[#f0f0f0] py-[3px] text-[#222]">
        <Chevron className="rotate-180" />
        <div className="w-[10px] h-[11px] bg-[#c9c9c9]" />
        <Chevron />
      </div>
    </div>
    <div className="h-3 flex items-center shrink-0 bg-[#f0f0f0]">
      <div className="h-full flex items-center bg-white pl-[6px]">
        <span className="w-[42px]">Perspektive</span>
        {viewIcons.map((item) => (
          <button key={item.name} aria-label={item.name} className="w-[14px] flex justify-center">
            <Svg className="size-[11px]" box={12}>{item.icon}</Svg>
          </button>
        ))}
        <Chevron className="rotate-90 text-[#222]" />
      </div>
      <div className="flex-1 flex justify-center"><span className="w-[11px] h-[10px] bg-[#c9c9c9]" /></div>
      <Chevron className="-rotate-90 text-[#222] mr-3" />
    </div>
  </main>
);

const statusIcons: { name: string; icon: React.ReactNode }[] = [
  { name: 'Verknüpfungen', icon: <><path d="M1 2h10v4H1z" fill="#f1c84b" stroke="#c09b30" /><path d="M6 4v7l2-2 2 1z" fill="#fff" stroke="#555" /></> },
  { name: 'Unterlagen', icon: <><path d="M1 8l3-4h5L7 8zM1 10h6" fill="#cfe7fa" stroke={blue} /><path d="M7 1l4 4M11 1 7 5" stroke="#d0342c" strokeWidth="1.500" /></> },
  { name: 'Fixierte Elemente', icon: <><path d="M2 1h6v4H1l1-2zM4 5v5" fill="#f3b68a" stroke="#c2602b" /><path d="M7 5v6l2-2 2 1z" fill="#fff" stroke="#555" /></> },
  { name: 'Fläche auswählen', icon: <><path d="M1 3l4-2v8l-4 2z" fill="#9fd0f5" stroke={blue} /><path d="M7 1l4 4M11 1 7 5" stroke="#d0342c" strokeWidth="1.500" /><path d="M6 6v5l2-2 2 1z" fill="#fff" stroke="#555" /></> },
  { name: 'Ziehen', icon: <><path d="M1 4h7M4.500 1v6" stroke="#222" strokeWidth="1.500" /><path d="M7 5v6l2-2 2 1z" fill="#fff" stroke="#555" /></> },
  { name: 'Hintergrundprozesse', icon: <circle cx="6" cy="6" r="3.500" stroke="#aaa" strokeWidth="2" fill="#ddd" /> },
  { name: 'Filter', icon: <path d="M1 2h10L7.500 6v5h-3V6z" fill="#eef1f5" stroke="#48566a" /> },
];

const StatusBar = () => (
  <footer className="h-[17px] flex items-center shrink-0 pl-[3px] text-[#222]">
    <p className="w-[487px] whitespace-nowrap">Zur Auswahl klicken, TABULATOR für andere Auswahl, STRG zum Hinzufügen, UMSCHALT zum Aufheben der Auswahl.</p>
    <Small>
      <path d="M3 6a3 3 0 1 1 6 0" stroke="#3f9a4c" />
      <path d="M1 6h4v5H1z" fill="#9fd0f5" stroke={blue} />
      <path d="M9 11V6M7.500 7.500 9 6l1.500 1.500" stroke="#4b6b8c" />
    </Small>
    <div className="relative ml-[5px]">
      <select aria-label="Bearbeitungsbereich" className="block w-[132px] h-3 appearance-none bg-white"><option /></select>
      <Chevron className="absolute right-[1px] top-[2px] text-[#999]" />
    </div>
    <div className="flex items-center gap-[2px] ml-[6px] mr-4">
      <Small><path d="M3 2h8L8 6H2zM5 6l-2 5" fill="#e5e5e5" stroke="#999" /></Small>
      <span>:0</span>
    </div>
    <Small><path d="M1 1.500h10v9H1zM1 3.500h10M3 5.500h2M6 5.500h3M5 8h4" fill="#f4f4f4" stroke="#333a45" /></Small>
    <span className="w-1" />
    <Small><path d="M3 2h8v8H6zM1 8l3-3v3z" fill="#bbb" stroke="#8f8f8f" /></Small>
    <div className="relative ml-1">
      <select aria-label="Entwurfsoption" defaultValue="Basisvorlage" className="block w-[133px] h-3 pl-[1px] appearance-none bg-white text-[#8a8a8a]"><option>Basisvorlage</option></select>
      <Chevron className="absolute right-[1px] top-[2px] text-[#999]" />
    </div>
    <div className="ml-auto mr-[62px] flex items-center gap-[5px]">
      {statusIcons.map((item) => (
        <button key={item.name} aria-label={item.name}><Small>{item.icon}</Small></button>
      ))}
      <span className="-ml-[5px]">:0</span>
    </div>
  </footer>
);

const App: React.FC = () => (
  <div className="h-screen flex flex-col overflow-hidden bg-[#cbcbcb] text-[8px] leading-[11px] font-['Lato','Open_Sans',sans-serif]">
    <TitleBar />
    <RibbonTabs />
    <Ribbon />
    <div className="h-[17px] mx-[2px] shrink-0 bg-[#f0f0f0]" />
    <div className="flex-1 min-h-0 flex pl-[2px]">
      <Properties />
      <Viewport />
    </div>
    <StatusBar />
  </div>
);

export default App;
